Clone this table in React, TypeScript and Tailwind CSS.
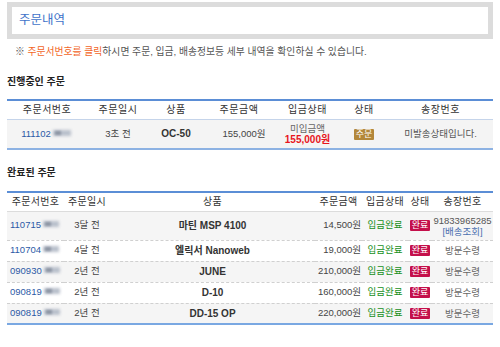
import React from 'react'

const font = "font-['Liberation_Sans','Noto_Sans_CJK_KR',sans-serif]"

function Blur({ w = 22 }: { w?: number }) {
  return (
    <span className="relative inline-block h-[10px] w-[22px] align-[-1px]" style={{ width: w }}>
      <span className="absolute inset-x-[2px] top-[2px] h-[6px] bg-[#b9c0cc] blur-[1.5px]" />
      <span className="absolute left-[4px] top-[3px] h-[4px] w-[6px] bg-[#8d95a4] blur-[1px]" />
    </span>
  )
}

function Badge({ kind, children }: { kind: 'order' | 'done'; children: React.ReactNode }) {
  return (
    <span
      className={
        kind === 'order'
          ? 'inline-block h-[11px] rounded-[1px] bg-[#b3873a] px-[2px] text-[9px] leading-[11px] text-white'
          : 'inline-block h-[11px] rounded-[1px] bg-[#c4104b] px-[2px] text-[9px] leading-[11px] text-white'
      }
    >
      {children}
    </span>
  )
}

const done = [
  { no: '110715', when: '3달 전', item: '마틴 MSP 4100', price: '14,500원', ship: 'track' },
  { no: '110704', when: '4달 전', item: '엘릭서 Nanoweb', price: '19,000원', ship: '방문수령' },
  { no: '090930', when: '2년 전', item: 'JUNE', price: '210,000원', ship: '방문수령' },
  { no: '090819', when: '2년 전', item: 'D-10', price: '160,000원', ship: '방문수령' },
  { no: '090819', when: '2년 전', item: 'DD-15 OP', price: '220,000원', ship: '방문수령' },
]

export default function App() {
  return (
    <div className={`${font} h-[347px] w-[500px] bg-white px-[7px] pt-[2px] text-[#444]`}>
      <div className="h-[37px] border-[5px] border-[#dcdcdc] bg-white pl-[7px]">
        <div className="text-[12.5px] leading-[27px] text-[#3f73c9]">주문내역</div>
      </div>

      <p className="mt-[6px] pl-[8px] text-[9.8px] leading-[14px] text-[#555]">
        ※ <span className="text-[#f2651f]">주문서번호를 클릭</span>하시면 주문, 입금, 배송정보등 세부 내역을 확인하실 수 있습니다.
      </p>

      <h2 className="mt-[16px] text-[10px] font-bold leading-[14px] text-[#222]">진행중인 주문</h2>

      <table className="mt-[10px] w-full table-fixed border-collapse text-center">
        <colgroup>
          <col className="w-[80px]" />
          <col className="w-[62px]" />
          <col className="w-[54px]" />
          <col className="w-[72px]" />
          <col className="w-[65px]" />
          <col className="w-[48px]" />
          <col className="w-[105px]" />
        </colgroup>
        <thead>
          <tr className="h-[19px] border-t-2 border-b border-t-[#5b8ed6] border-b-[#c5d4ea] text-[10px] tracking-[0.5px] text-[#333]">
            <th className="font-normal">주문서번호</th>
            <th className="font-normal">주문일시</th>
            <th className="font-normal">상품</th>
            <th className="font-normal">주문금액</th>
            <th className="font-normal">입금상태</th>
            <th className="font-normal">상태</th>
            <th className="font-normal">송장번호</th>
          </tr>
        </thead>
        <tbody>
          <tr className="h-[30px] border-b-2 border-b-[#8db2e3] bg-[#f4f4f4] text-[9.5px]">
            <td className="text-[#2c5aa6]">
              111102<Blur />
            </td>
            <td>3초 전</td>
            <td className="text-[10px] font-bold text-[#333]">OC-50</td>
            <td className="pl-[10px]">155,000원</td>
            <td className="leading-[11px]">
              <div className="text-[#666]">미입금액</div>
              <div className="text-[10px] font-bold text-[#e8141c]">155,000원</div>
            </td>
            <td>
              <Badge kind="order">주문</Badge>
            </td>
            <td className="text-[#555]">미발송상태입니다.</td>
          </tr>
        </tbody>
      </table>

      <h2 className="mt-[16px] text-[10px] font-bold leading-[14px] text-[#222]">완료된 주문</h2>

      <table className="mt-[11px] w-full table-fixed border-collapse text-center">
        <colgroup>
          <col className="w-[57px]" />
          <col className="w-[46px]" />
          <col className="w-[205px]" />
          <col className="w-[47px]" />
          <col className="w-[46px]" />
          <col className="w-[24px]" />
          <col className="w-[61px]" />
        </colgroup>
        <thead>
          <tr className="h-[19px] border-t-2 border-b border-t-[#5b8ed6] border-b-[#dcdcdc] text-[10px] tracking-[0.3px] text-[#333]">
            <th className="whitespace-nowrap font-normal">주문서번호</th>
            <th className="whitespace-nowrap font-normal">주문일시</th>
            <th className="font-normal">상품</th>
            <th className="whitespace-nowrap font-normal">주문금액</th>
            <th className="whitespace-nowrap font-normal">입금상태</th>
            <th className="whitespace-nowrap font-normal">상태</th>
            <th className="whitespace-nowrap font-normal">송장번호</th>
          </tr>
        </thead>
        <tbody className="text-[9.5px]">
          {done.map((r, i) => (
            <tr
              key={i}
              className={
                (i === 0 ? 'h-[29px] ' : 'h-[21px] ') +
                (i % 2 === 0 ? 'bg-[#f5f5f5] ' : 'bg-white ') +
                (i === done.length - 1
                  ? 'border-b-2 border-b-[#7aa8e2]'
                  : 'border-b border-dashed border-b-[#d0d0d0]')
              }
            >
              <td className="whitespace-nowrap pl-[3px] text-left text-[#2c5aa6]">
                {r.no}
                <Blur w={20} />
              </td>
              <td className="whitespace-nowrap">{r.when}</td>
              <td className="text-[10px] font-bold text-[#333]">{r.item}</td>
              <td className="whitespace-nowrap pr-[1px] text-right">{r.price}</td>
              <td className="whitespace-nowrap text-[#17901c]">입금완료</td>
              <td>
                <Badge kind="done">완료</Badge>
              </td>
              <td className="whitespace-nowrap leading-[11px] text-[#666]">
                {r.ship === 'track' ? (
                  <>
                    <div className="text-[#555]">91833965285</div>
                    <div className="text-[#4a6fb0]">[배송조회]</div>
                  </>
                ) : (
                  r.ship
                )}
              </td>
            </tr>
          ))}
        </tbody>
      </table>
    </div>
  )
}
